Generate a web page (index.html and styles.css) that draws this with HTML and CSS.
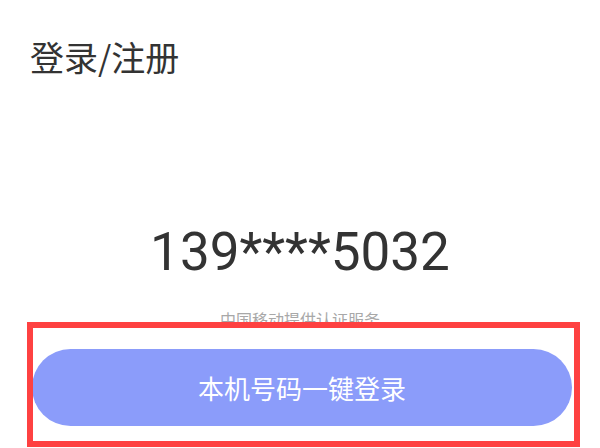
FILE: index.html
```html
<!DOCTYPE html>
<html lang="zh">
<head>
<meta charset="utf-8">
<link rel="stylesheet" href="styles.css">
</head>
<body>
<div class="page">
  <h1 class="title">登录/注册</h1>
  <div class="phone">139****5032</div>
  <div class="provider">中国移动提供认证服务</div>
  <button class="login-btn">本机号码一键登录</button>
  <div class="annot-frame"></div>
</div>
</body>
</html>
```
FILE: styles.css
```css
html, body {
  margin: 0;
  padding: 0;
  background: #ffffff;
}
.page {
  position: relative;
  width: 600px;
  height: 448px;
  overflow: hidden;
  display: flex;
  flex-direction: column;
  font-family: "Noto Sans CJK SC", "Noto Sans", sans-serif;
}
.title {
  margin: 0;
  padding: 37px 0 0 30px;
  font-size: 34px;
  line-height: 40px;
  font-weight: 400;
  color: #333333;
}
.phone {
  margin-top: 143px;
  text-align: center;
  font-family: Roboto, "Noto Sans", sans-serif;
  font-size: 53px;
  line-height: 64px;
  color: #333333;
}
.provider {
  margin-top: 25px;
  text-align: center;
  font-size: 16px;
  line-height: 20px;
  color: #a8a8a8;
}
.login-btn {
  margin: 20px 0 0 32px;
  width: 540px;
  height: 77px;
  border: none;
  border-radius: 39px;
  background: #8b9cfa;
  color: #ffffff;
  font-family: "Noto Sans CJK SC", "Noto Sans", sans-serif;
  font-size: 26px;
  padding: 0;
}
.annot-frame {
  position: absolute;
  left: 27px;
  top: 322px;
  width: 553px;
  height: 125px;
  box-sizing: border-box;
  border: 6px solid #fe4141;
  pointer-events: none;
}
```
